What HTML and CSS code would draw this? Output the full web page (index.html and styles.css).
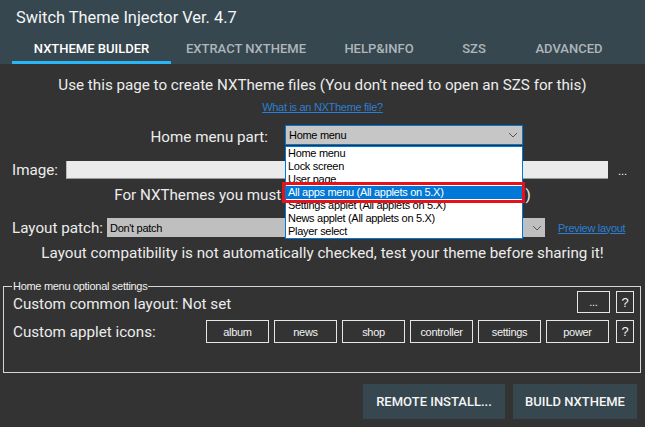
FILE: index.html
```html
<!DOCTYPE html>
<html>
<head>
<meta charset="utf-8">
<link rel="stylesheet" href="styles.css">
</head>
<body>
<div class="app">
  <header class="header">
    <div class="title">Switch Theme Injector Ver. 4.7</div>
    <nav class="tabs">
      <div class="tab tab-builder active">NXTHEME BUILDER</div>
      <div class="tab tab-extract">EXTRACT NXTHEME</div>
      <div class="tab tab-help">HELP&amp;INFO</div>
      <div class="tab tab-szs">SZS</div>
      <div class="tab tab-adv">ADVANCED</div>
    </nav>
  </header>
  <main class="main">
    <div class="line intro">Use this page to create NXTheme files (You don't need to open an SZS for this)</div>
    <div class="linkrow"><span class="link">What is an NXTheme file?</span></div>
    <div class="partrow">
      <div class="label partlabel">Home menu part:</div>
      <div class="combo-wrap">
        <div class="combo open">
          <span>Home menu</span>
          <svg class="chev" width="10" height="6" viewBox="0 0 10 6"><polyline points="1,1 5,5 9,1" fill="none" stroke="#555" stroke-width="1"/></svg>
        </div>
        <ul class="droplist">
          <li>Home menu</li>
          <li>Lock screen</li>
          <li>User page</li>
          <li class="sel">All apps menu (All applets on 5.X)</li>
          <li>Settings applet (All applets on 5.X)</li>
          <li>News applet (All applets on 5.X)</li>
          <li>Player select</li>
        </ul>
        <div class="redbox"></div>
      </div>
    </div>
    <div class="imagerow">
      <div class="label imglabel">Image:</div>
      <div class="textbox"></div>
      <div class="dots">...</div>
    </div>
    <div class="line note">For NXThemes you must use a 1280x720 image (DDS or JPG)</div>
    <div class="patchrow">
      <div class="label patchlabel">Layout patch:</div>
      <div class="combo patch">
        <span>Don't patch</span>
        <svg class="chev" width="10" height="6" viewBox="0 0 10 6"><polyline points="1,1 5,5 9,1" fill="none" stroke="#555" stroke-width="1"/></svg>
      </div>
      <span class="link preview">Preview layout</span>
    </div>
    <div class="line compat">Layout compatibility is not automatically checked, test your theme before sharing it!</div>
    <section class="group">
      <span class="legend">Home menu optional settings</span>
      <div class="grow grow1">
        <div class="label">Custom common layout: Not set</div>
        <div class="btns">
          <div class="btn wide">...</div>
          <div class="btn q">?</div>
        </div>
      </div>
      <div class="grow grow2">
        <div class="label">Custom applet icons:</div>
        <div class="btns">
          <div class="applets">
            <div class="btn app">album</div>
            <div class="btn app">news</div>
            <div class="btn app">shop</div>
            <div class="btn app">controller</div>
            <div class="btn app">settings</div>
            <div class="btn app">power</div>
          </div>
          <div class="btn q">?</div>
        </div>
      </div>
    </section>
    <div class="actions">
      <div class="action remote">REMOTE INSTALL...</div>
      <div class="action build">BUILD NXTHEME</div>
    </div>
  </main>
</div>
</body>
</html>
```

FILE: styles.css
```css
* { box-sizing: border-box; }
html, body { margin: 0; padding: 0; }
body {
  background: #333333;
  width: 645px;
  height: 427px;
  overflow: hidden;
  font-family: Roboto, "Liberation Sans", sans-serif;
  color: #ececec;
}
.app { width: 645px; height: 427px; }

.header { background: #37474f; height: 64px; }
.title {
  height: 36px;
  padding-left: 16px;
  font-size: 16.4px;
  line-height: 36px;
  color: #f4f6f7;
}
.tabs { display: flex; height: 28px; padding-left: 12px; }
.tab {
  height: 28px;
  text-align: center;
  font-size: 13px;
  font-weight: 500;
  line-height: 25px;
  color: #aeb6bb;
  border-bottom: 3px solid transparent;
}
.tab.active { color: #ffffff; border-bottom-color: #29b6f6; }
.tab-builder { width: 159px; }
.tab-extract { width: 150px; }
.tab-help { width: 116px; }
.tab-szs { width: 74px; }
.tab-adv { width: 116px; }

.main { display: flex; flex-direction: column; }
.label { font-size: 15.2px; line-height: 20px; color: #ececec; white-space: nowrap; }
.line { font-size: 15.2px; line-height: 20px; height: 20px; text-align: center; white-space: nowrap; }
.intro { margin-top: 11px; }
.linkrow { margin-top: 4px; text-align: center; height: 14px; line-height: 14px; }
.link {
  font-family: "Liberation Sans", sans-serif;
  font-size: 11px;
  color: #2a7fd4;
  text-decoration: underline;
  letter-spacing: -0.3px;
}

.partrow {
  margin-top: 12px;
  height: 22px;
  display: grid;
  grid-template-columns: 268px 238px;
  column-gap: 17px;
  align-items: start;
  position: relative;
  z-index: 2;
}
.partlabel { text-align: right; padding-top: 2px; }
.combo-wrap { position: relative; }
.combo {
  height: 20px;
  display: flex;
  align-items: center;
  justify-content: space-between;
  padding: 0 4px 0 3px;
  font-family: "Liberation Sans", sans-serif;
  font-size: 11px;
  letter-spacing: -0.3px;
  color: #000;
  background: #c6c6c6;
}
.combo.open { border: 1px solid #0078d7; }
.droplist {
  position: absolute;
  left: 0;
  top: 21px;
  width: 238px;
  margin: 0;
  padding: 0;
  list-style: none;
  background: #fff;
  border: 1px solid #0078d7;
  font-family: "Liberation Sans", sans-serif;
  font-size: 11px;
  letter-spacing: -0.3px;
  color: #000;
}
.droplist li { height: 13px; line-height: 13px; padding-left: 2px; white-space: nowrap; }
.droplist li.sel { background: #0078d7; color: #fff; }
.redbox {
  position: absolute;
  left: -3px;
  top: 57px;
  width: 243px;
  height: 21px;
  border: 3px solid #e8111a;
}

.imagerow {
  margin-top: 14px;
  display: flex;
  align-items: center;
  padding-left: 12px;
  height: 18px;
}
.imglabel { width: 54px; }
.textbox {
  width: 542px;
  height: 18px;
  background: #ebebeb;
  border-left: 1px solid #b8b8b8;
  border-bottom: 1px solid #9a9a9a;
}
.dots {
  margin-left: 10px;
  font-family: "Liberation Sans", sans-serif;
  font-size: 11px;
  color: #fff;
  padding-top: 2px;
}
.note { margin-top: 6px; }

.patchrow {
  margin-top: 13px;
  display: flex;
  align-items: center;
  padding-left: 12px;
  height: 19px;
}
.patchlabel { width: 95px; }
.combo.patch { width: 438px; height: 19px; background: #bfbfbf; padding-right: 3px; }
.preview { margin-left: 13px; }
.compat { margin-top: 6px; }

.group {
  position: relative;
  margin: 23px 0 0 3px;
  width: 638px;
  height: 87px;
  padding: 4px 6px 0 9px;
  border: 1px solid #d6d6d6;
}
.legend {
  position: absolute;
  left: 8px;
  top: -7px;
  padding: 0 1px;
  background: #333333;
  font-family: "Liberation Sans", sans-serif;
  font-size: 11px;
  line-height: 12px;
  letter-spacing: -0.3px;
  color: #f0f0f0;
}
.grow {
  display: flex;
  align-items: center;
  justify-content: space-between;
}
.grow1 { height: 22px; }
.grow1 .label { margin-top: 4px; }
.grow2 { height: 23px; margin-top: 7px; }
.btns { display: flex; gap: 6px; height: 100%; }
.applets { display: flex; gap: 5px; margin-right: 1px; }
.btn {
  border: 1px solid #e6e6e6;
  display: flex;
  align-items: center;
  justify-content: center;
  font-family: "Liberation Sans", sans-serif;
  font-size: 11px;
  letter-spacing: -0.3px;
  color: #f2f2f2;
  height: 100%;
}
.btn.wide { width: 33px; align-items: flex-end; padding-bottom: 4px; }
.btn.q { width: 18px; font-size: 13px; }
.btn.app { width: 63px; }

.actions {
  margin-top: 11px;
  display: flex;
  justify-content: flex-end;
  gap: 8px;
  padding-right: 8px;
}
.action {
  height: 35px;
  background: #37474f;
  color: #f5f5f5;
  font-size: 13px;
  font-weight: 500;
  display: flex;
  align-items: center;
  justify-content: center;
}
.remote { width: 142px; }
.build { width: 124px; }
```
